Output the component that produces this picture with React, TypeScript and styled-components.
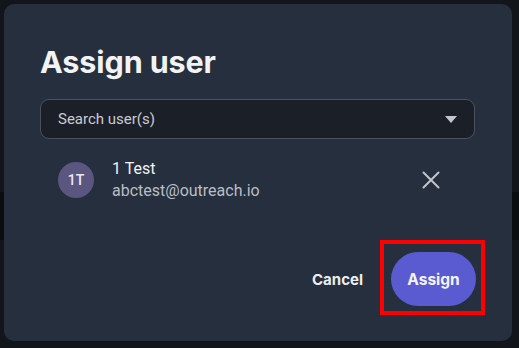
import React from 'react';
import styled, { createGlobalStyle } from 'styled-components';

const GlobalStyle = createGlobalStyle`
  html, body {
    margin: 0;
    padding: 0;
    background: #121519;
  }
  body {
    font-family: Inter, "Noto Sans", sans-serif;
    -webkit-font-smoothing: antialiased;
  }
`;

// dimmed page behind the dialog
const Backdrop = styled.div`
  width: 519px;
  height: 348px;
  display: flex;
  flex-direction: column;
  overflow: hidden;
  position: relative;
`;

const BackdropBand = styled.div<{ $h: number; $dark?: boolean }>`
  height: ${(p) => p.$h}px;
  flex-shrink: 0;
  background: ${(p) => (p.$dark ? '#0a0d10' : '#121519')};
`;

const Dialog = styled.div`
  position: absolute;
  top: 4px;
  left: 4px;
  width: 508px;
  height: 337px;
  box-sizing: border-box;
  padding: 39px 37px 35px 36px;
  background: #262f3d;
  border-radius: 10px;
  display: flex;
  flex-direction: column;
`;

const Title = styled.h2`
  margin: 0;
  font-family: Inter, sans-serif;
  font-weight: 700;
  font-size: 30.5px;
  line-height: 37px;
  color: #f2f3f5;
  letter-spacing: -0.1px;
`;

const SearchBox = styled.div`
  margin-top: 19px;
  height: 40px;
  box-sizing: border-box;
  border: 1px solid #4b525d;
  border-radius: 9px;
  background: #1b1f27;
  display: flex;
  align-items: center;
  padding: 0 17px 0 17px;
`;

const SearchText = styled.span`
  flex: 1;
  font-family: Roboto, sans-serif;
  font-size: 15px;
  color: #c9cdd3;
`;

const Caret = styled.span`
  width: 0;
  height: 0;
  border-left: 6px solid transparent;
  border-right: 6px solid transparent;
  border-top: 7px solid #c3c7cd;
`;

const UserRow = styled.div`
  margin-top: 19px;
  display: flex;
  align-items: center;
  padding-left: 18px;
`;

const Avatar = styled.div`
  width: 36px;
  height: 36px;
  border-radius: 50%;
  background: #5b5680;
  color: #eceaf4;
  font-family: Roboto, sans-serif;
  font-weight: 500;
  font-size: 14px;
  display: flex;
  align-items: center;
  justify-content: center;
  flex-shrink: 0;
`;

const UserInfo = styled.div`
  margin-left: 18px;
  flex: 1;
  display: flex;
  flex-direction: column;
  font-family: Roboto, sans-serif;
  font-size: 16px;
  line-height: 22px;
`;

const UserName = styled.span`
  color: #f1f2f4;
`;

const UserEmail = styled.span`
  color: #b9bec6;
`;

const RemoveButton = styled.button`
  width: 40px;
  height: 40px;
  margin-right: 24px;
  border: none;
  background: transparent;
  padding: 0;
  display: flex;
  align-items: center;
  justify-content: center;
  cursor: pointer;
`;

const Footer = styled.div`
  margin-top: auto;
  display: flex;
  justify-content: flex-end;
  align-items: center;
  gap: 28px;
`;

const CancelButton = styled.button`
  border: none;
  background: transparent;
  padding: 0;
  font-family: Inter, sans-serif;
  font-weight: 700;
  font-size: 15px;
  color: #eceef1;
  cursor: pointer;
`;

// the red frame is an annotation drawn over the button
const PrimaryButton = styled.button<{ $highlight?: boolean }>`
  position: relative;
  width: 85px;
  height: 54px;
  margin-right: -1px;
  border: none;
  border-radius: 27px;
  background: #5b5bd1;
  color: #f4f4fb;
  font-family: Inter, sans-serif;
  font-weight: 700;
  font-size: 15.5px;
  cursor: pointer;

  &::after {
    content: '';
    display: ${(p) => (p.$highlight ? 'block' : 'none')};
    position: absolute;
    top: -12px;
    bottom: -9px;
    left: -11px;
    right: -9px;
    border: 4px solid #ff0000;
    pointer-events: none;
  }
`;

const CloseIcon = () => (
  <svg width="18" height="18" viewBox="0 0 18 18" fill="none">
    <path
      d="M1.5 1.5 L16.5 16.5 M16.5 1.5 L1.5 16.5"
      stroke="#c1c5cb"
      strokeWidth="2"
      strokeLinecap="round"
    />
  </svg>
);

export default function App() {
  return (
    <>
      <GlobalStyle />
      <Backdrop>
        <BackdropBand $h={192} />
        <BackdropBand $h={48} $dark />
        <BackdropBand $h={108} />
        <Dialog>
          <Title>Assign user</Title>
          <SearchBox>
            <SearchText>Search user(s)</SearchText>
            <Caret />
          </SearchBox>
          <UserRow>
            <Avatar>1T</Avatar>
            <UserInfo>
              <UserName>1 Test</UserName>
              <UserEmail>abctest@outreach.io</UserEmail>
            </UserInfo>
            <RemoveButton aria-label="Remove">
              <CloseIcon />
            </RemoveButton>
          </UserRow>
          <Footer>
            <CancelButton>Cancel</CancelButton>
            <PrimaryButton $highlight>Assign</PrimaryButton>
          </Footer>
        </Dialog>
      </Backdrop>
    </>
  );
}
